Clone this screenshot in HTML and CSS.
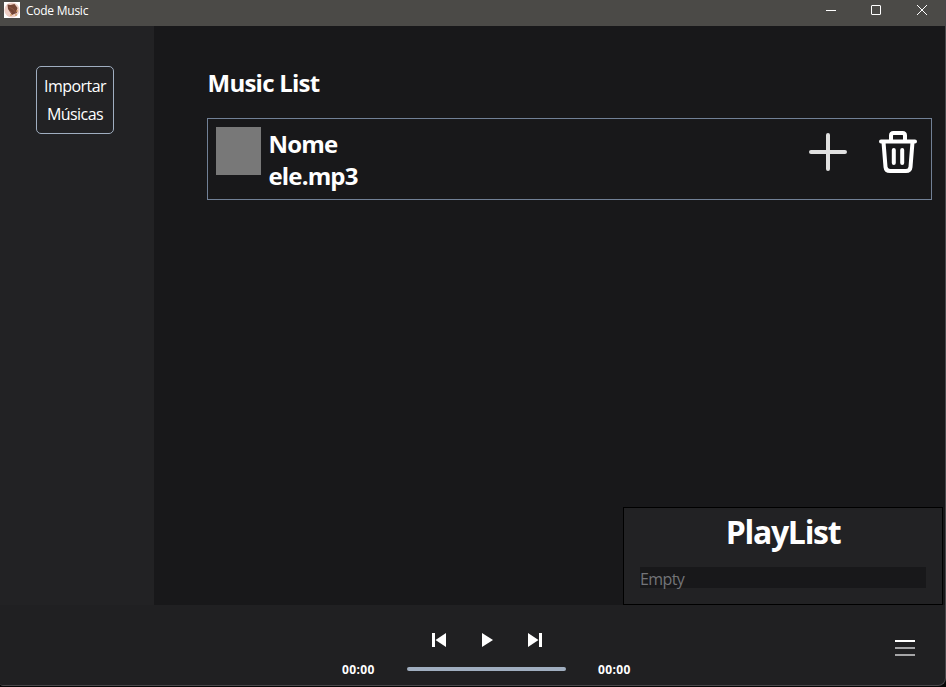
FILE: index.html
```html
<!DOCTYPE html>
<html lang="pt-BR">
<head>
<meta charset="utf-8">
<title>Code Music</title>
<link rel="stylesheet" href="styles.css">
</head>
<body>
<div class="window">
  <header class="titlebar">
    <svg class="app-icon" viewBox="0 0 16 16">
      <rect width="16" height="16" fill="#fff"/>
      <circle cx="8" cy="8" r="7.6" fill="#efcfc6"/>
      <path d="M3.500 2.500l3 .5 4-1 3 4-1 3 .5 2-3 1-2 1-2-3-2-3z" fill="#744535"/>
      <path d="M5 5l4 2 3 4M5 8l3 3" stroke="#8a5644" fill="none"/>
      <path d="M6 13h2M11 13h2M13 8v2" stroke="#c58b43" fill="none"/>
    </svg>
    <span class="app-name">Code Music</span>
    <div class="controls">
      <svg class="minimize" viewBox="0 0 12 12"><path d="M1 6.500h10"/></svg>
      <svg viewBox="0 0 12 12"><rect x="1.5" y="1.5" width="9" height="9" rx=".5"/></svg>
      <svg viewBox="0 0 12 12"><path d="M1 1l10 10M11 1L1 11"/></svg>
    </div>
  </header>
  <div class="body">
    <aside class="sidebar">
      <button class="import">Importar<br>Músicas</button>
    </aside>
    <main class="main">
      <h1 class="heading">Music List</h1>
      <div class="track">
        <div class="cover"></div>
        <div class="track-name">Nome<br>ele.mp3</div>
        <svg class="add" viewBox="0 0 38 38"><path d="M19 2v34M2 19h34"/></svg>
        <svg class="trash" viewBox="0 0 38 42"><path d="M2 10.500h34M12 10V4.500q0-2.500 2.500-2.500h9q2.500 0 2.500 2.500V10M4.500 11l2 25q.4 4 4.500 4h16q4.100 0 4.500-4l2-25M14.800 19v13M23.200 19v13"/></svg>
      </div>
      <section class="playlist">
        <h2>PlayList</h2>
        <div class="empty">Empty</div>
      </section>
    </main>
  </div>
  <footer class="player">
    <div class="center">
      <div class="buttons">
        <svg viewBox="0 0 14 14"><path d="M0 0h3v14H0zM14 0v14L3.500 7z"/></svg>
        <svg viewBox="0 0 14 14"><path d="M2 0v14l11-7z"/></svg>
        <svg viewBox="0 0 14 14"><path d="M14 0h-3v14h3zM0 0v14l10.500-7z"/></svg>
      </div>
      <div class="timeline"><span>00:00</span><div class="bar"></div><span>00:00</span></div>
    </div>
    <div class="menu"><i></i><i></i><i></i></div>
  </footer>
</div>
</body>
</html>
```
FILE: styles.css
```css
* { box-sizing: border-box; }
body { margin: 0; background: #060606; color: #fff; font-family: "Open Sans", "Noto Sans", sans-serif; overflow: hidden; }
h1, h2 { margin: 0; }
svg { display: block; flex: none; }
.window { width: 946px; height: 686px; display: flex; flex-direction: column; border: solid #4a484b; border-width: 0 1px 1px 0; border-radius: 0 0 8px 3px; overflow: hidden; background: #202022; }
.titlebar { height: 26px; background: #4b4a47; display: flex; padding: 2px 17px 0 4px; flex: none; }
.app-icon { width: 16px; height: 16px; }
.app-name { margin-left: 6px; font-size: 12px; line-height: 18px; letter-spacing: -.25px; }
.controls { margin-left: auto; display: flex; gap: 34px; padding-top: 2px; }
.controls svg { width: 12px; height: 12px; fill: none; stroke: #fff; stroke-width: 1; }
.controls .minimize { margin-right: -1px; }
.body { height: 579px; display: flex; flex: none; }
.sidebar { width: 154px; background: #222224; padding: 40px 0 0 36px; }
.import { width: 78px; height: 68px; padding: 0; border: 1px solid #a0aec0; border-radius: 5px; background: none; color: #fff; font: 16px/28px "Open Sans", sans-serif; letter-spacing: -.55px; white-space: nowrap; }
.main { flex: 1; background: #18181a; padding: 39px 2px 0 53px; display: flex; flex-direction: column; }
.heading { font-size: 24px; line-height: 36px; height: 53px; padding-left: .5px; letter-spacing: -.75px; }
.track { width: 725px; height: 82px; border: 1px solid #718096; display: flex; padding: 8px; }
.cover { width: 45px; height: 48px; background: #787878; }
.track-name { margin-left: 7.5px; padding-top: 1px; font-size: 24px; line-height: 32px; font-weight: 700; letter-spacing: -.85px; }
.add { width: 38px; height: 38px; margin: 6px 32px 0 auto; fill: none; stroke: #e0e0e0; stroke-width: 4; stroke-linecap: round; }
.trash { width: 38px; height: 42px; margin: 4px 6px 0 0; fill: none; stroke: #fff; stroke-width: 4; stroke-linecap: round; stroke-linejoin: round; }
.playlist { width: 320px; height: 98px; margin: auto 0 0 auto; border: 1px solid #000; background: #222224; padding: 5px 16px 16px; display: flex; flex-direction: column; justify-content: space-between; }
.playlist h2 { font-size: 32px; line-height: 38px; text-align: center; letter-spacing: -1.3px; }
.empty { height: 21px; background: #18181a; color: #737478; font-size: 16px; line-height: 24px; letter-spacing: -.6px; }
.player { flex: 1; display: flex; }
.center { width: 290px; margin-left: 342px; padding-top: 28px; }
.buttons { display: flex; justify-content: center; gap: 34px; }
.buttons svg { width: 14px; height: 14px; fill: #fff; }
.timeline { margin-top: 13px; display: flex; align-items: center; font-size: 12px; line-height: 18px; font-weight: 700; }
.timeline span { width: 34px; padding-top: 1px; margin-bottom: -1px; letter-spacing: .35px; }
.bar { width: 159px; height: 4px; margin: 0 32px 0 31px; border-radius: 2px; background: #a0aec0; flex: none; }
.menu { margin: 35px 0 0 263px; width: 20px; height: 16px; display: flex; flex-direction: column; justify-content: space-between; }
.menu i { height: 2px; background: #a5a5a7; }
.menu i:first-child { background: #fff; }
```
